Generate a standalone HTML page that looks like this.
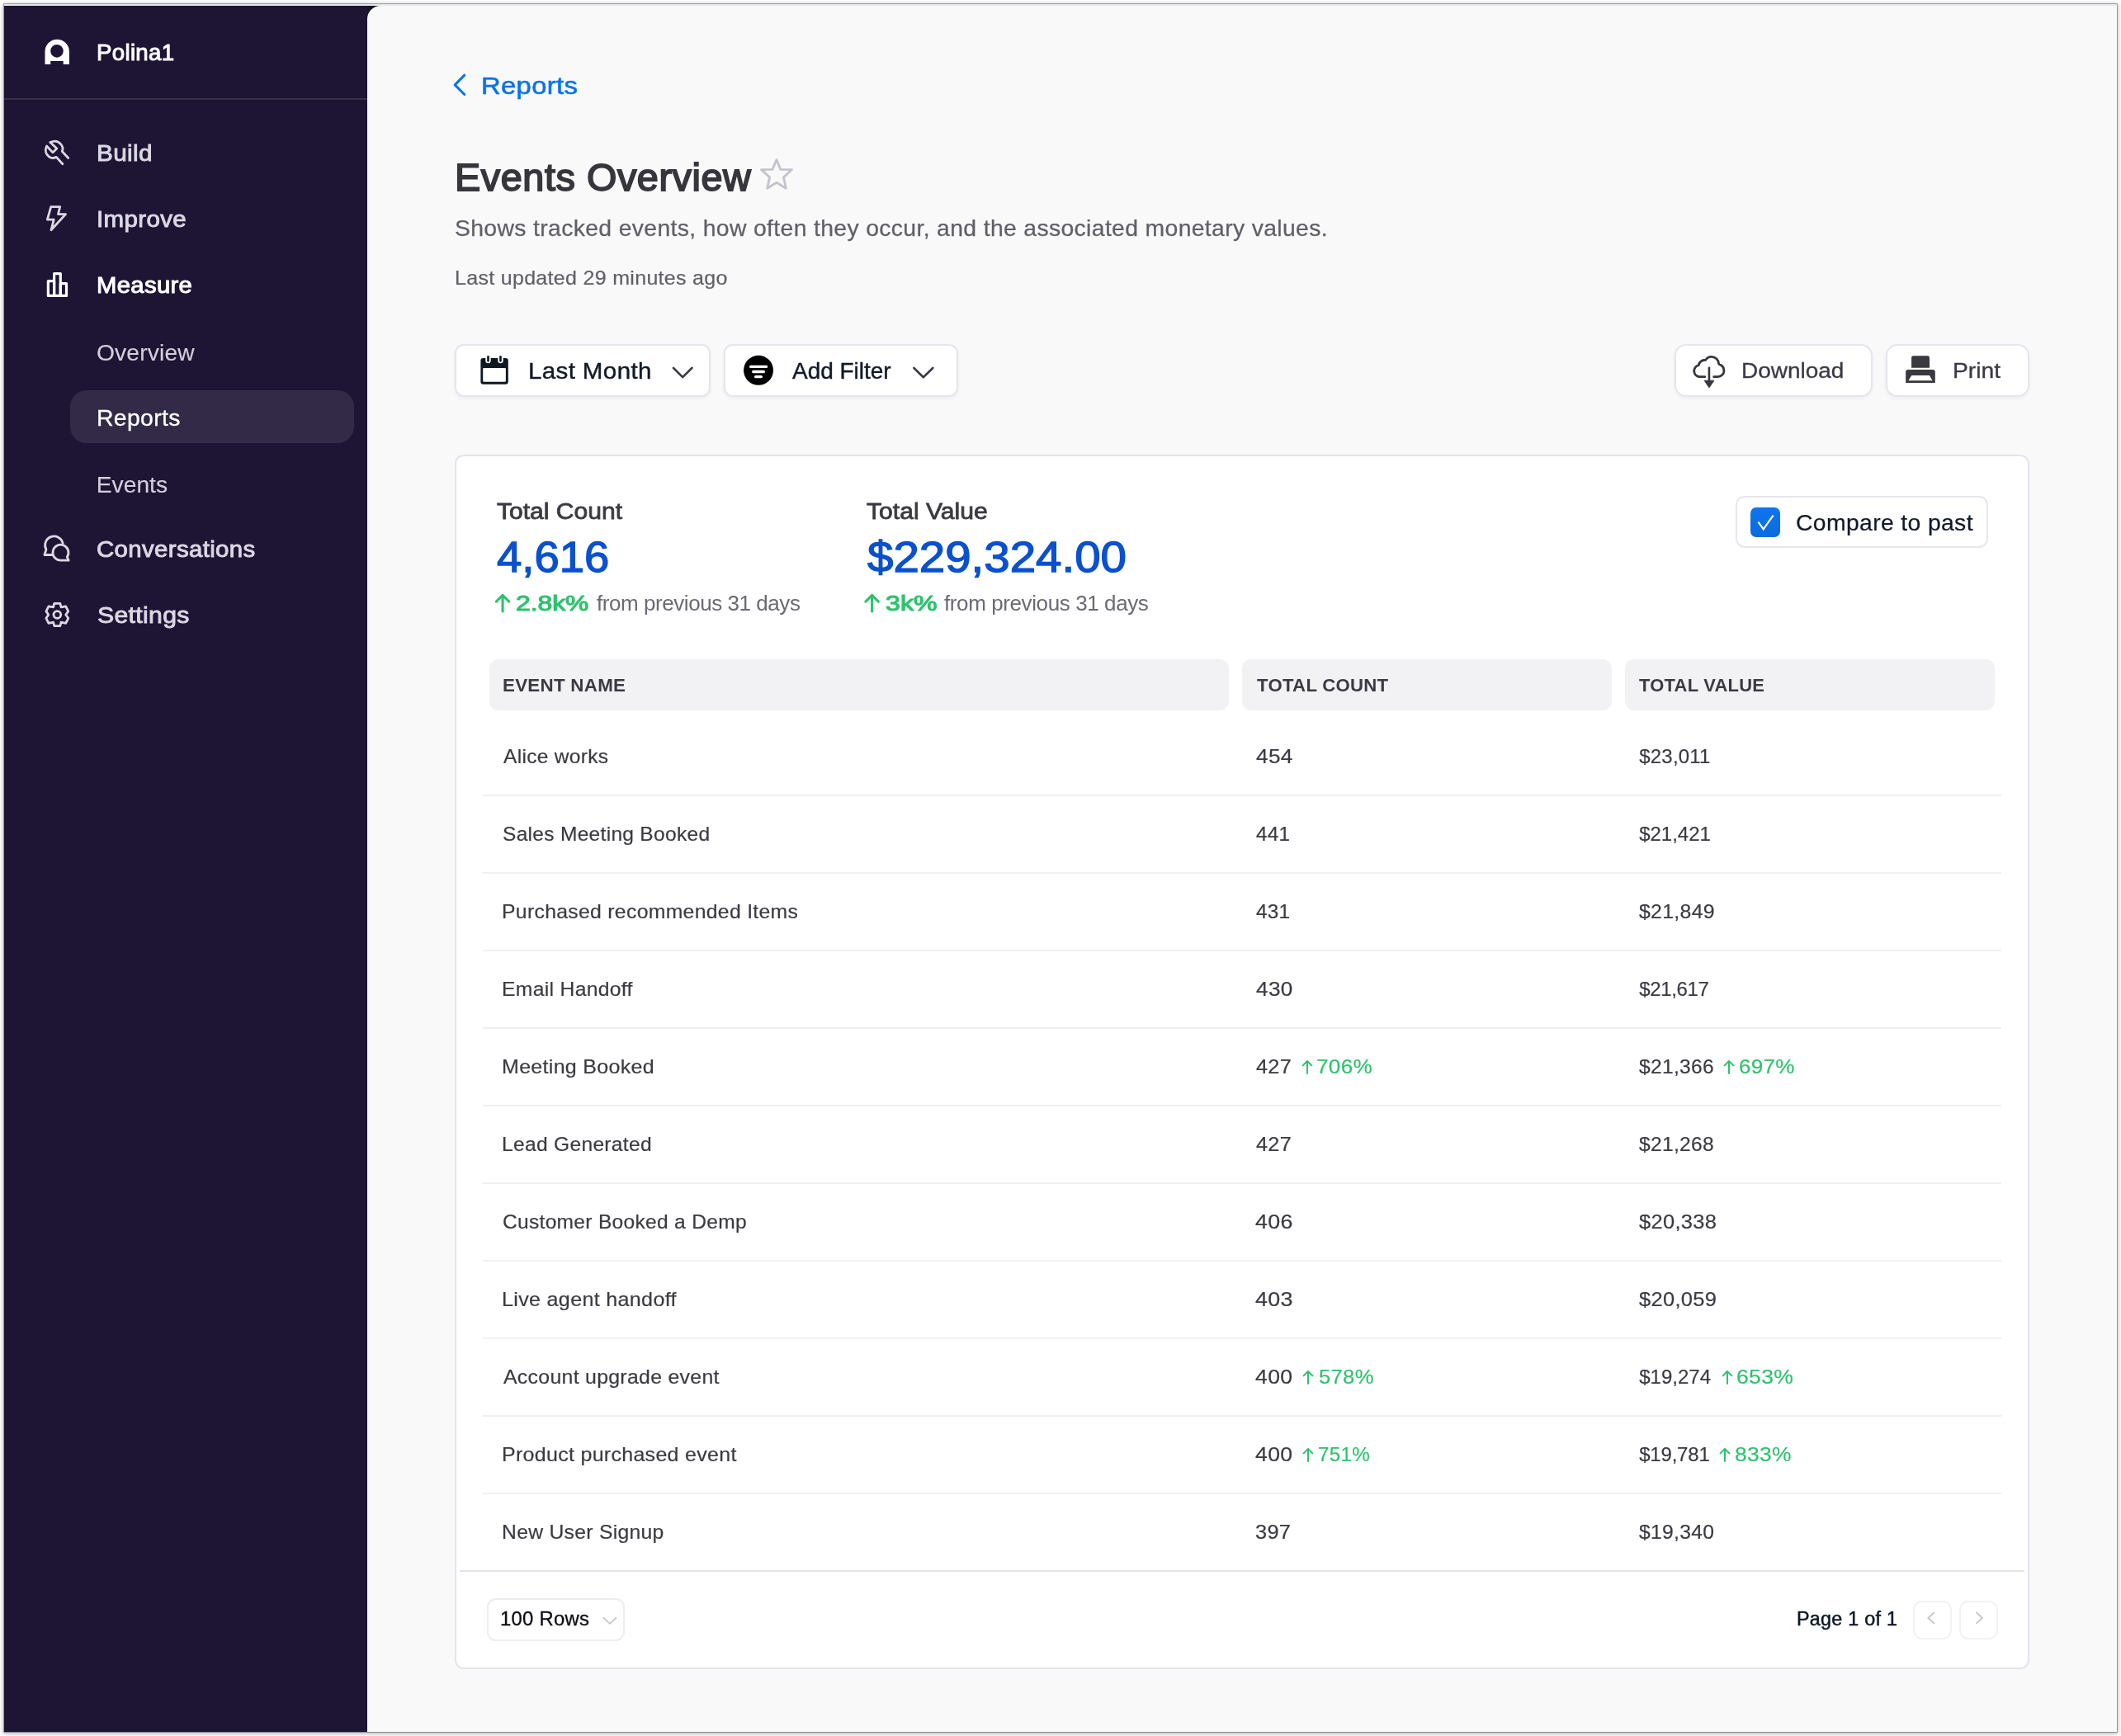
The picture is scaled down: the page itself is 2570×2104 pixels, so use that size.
<!DOCTYPE html>
<html lang="en">
<head>
<meta charset="utf-8">
<title>Events Overview</title>
<style>
html,body{margin:0;padding:0;}
body{width:2570px;height:2104px;background:#ffffff;position:relative;overflow:hidden;font-family:"Liberation Sans",sans-serif;}
.win{position:absolute;left:5px;top:5px;width:2560px;height:2094px;background:#1e1434;box-shadow:0 0 0 1px rgba(0,0,0,.28),0 1px 5px 1px rgba(0,0,0,.32);overflow:hidden;}
.abs,.t,.sep,.arr,.box,.ico{position:absolute;}
.t{line-height:1;white-space:nowrap;margin:0;}
.topstrip{left:5px;top:5px;width:2560px;height:2px;background:#e7e8ed;}
.sideline{left:5px;top:119px;width:440px;height:2px;background:#3a3148;}
.main{left:445px;top:7px;width:2120px;height:2092px;background:#f9f9fa;border-top-left-radius:16px;}
.pill{left:85px;top:473px;width:344px;height:64px;border-radius:20px;background:#322a46;}
.btn{background:#fff;border:2px solid #e5e5ec;border-radius:11px;box-sizing:border-box;box-shadow:0 2px 4px rgba(30,20,60,.05);}
.card{left:551px;top:551px;width:1908px;height:1472px;background:#fff;border:2px solid #e5e4ec;border-radius:11px;box-sizing:border-box;}
.th{top:799px;height:62px;background:#f2f2f5;border-radius:11px;}
.sep{left:585px;width:1840px;height:2px;background:#f0f0f3;}
.fsep{left:557px;top:1903px;width:1896px;height:2px;background:#e5e4ec;}
</style>
</head>
<body>
<div class="win abs"></div>
<div class="topstrip abs"></div>
<div class="abs" style="left:445px;top:7px;width:16px;height:16px;background:#101722"></div>
<div class="main abs"></div>
<div class="sideline abs"></div>
<div class="pill abs"></div>

<!-- toolbar buttons -->
<div class="btn abs" style="left:551px;top:417px;width:310px;height:64px"></div>
<div class="btn abs" style="left:877px;top:417px;width:284px;height:64px"></div>
<div class="btn abs" style="left:2029px;top:417px;width:240px;height:64px;border-radius:14px"></div>
<div class="btn abs" style="left:2285px;top:417px;width:174px;height:64px;border-radius:14px"></div>

<!-- card -->
<div class="card abs"></div>
<div class="th abs" style="left:593px;width:896px"></div>
<div class="th abs" style="left:1505px;width:448px"></div>
<div class="th abs" style="left:1969px;width:448px"></div>
<div class="btn abs" style="left:2103px;top:601px;width:306px;height:63px;box-shadow:none;border-color:#e6e6ee"></div>
<div class="abs" style="left:2121px;top:615px;width:36px;height:36px;border-radius:7px;background:linear-gradient(#0d76ee,#0a6bdf)"></div>
<div class="sep" style="top:963px"></div>
<div class="sep" style="top:1057px"></div>
<div class="sep" style="top:1151px"></div>
<div class="sep" style="top:1245px"></div>
<div class="sep" style="top:1339px"></div>
<div class="sep" style="top:1433px"></div>
<div class="sep" style="top:1527px"></div>
<div class="sep" style="top:1621px"></div>
<div class="sep" style="top:1715px"></div>
<div class="sep" style="top:1809px"></div>
<div class="fsep abs"></div>
<div class="btn abs" style="left:590px;top:1937px;width:167px;height:52px;box-shadow:none;border-color:#ededf2"></div>
<div class="btn abs" style="left:2317.5px;top:1939.5px;width:47px;height:47px;box-shadow:none;border-color:#f2f2f6;border-radius:11px"></div>
<div class="btn abs" style="left:2373.5px;top:1939.5px;width:47px;height:47px;box-shadow:none;border-color:#f2f2f6;border-radius:11px"></div>

<svg class="abs" style="left:0;top:0" width="2570" height="2104" viewBox="0 0 2570 2104" fill="none">
<!-- brand logo -->
<path fill="#ffffff" fill-rule="evenodd" d="M54.5 78V62.4a14.7 14.7 0 0 1 29.4 0V78H76.7V74H61.2V78Z M76.75 61.85a7.8 7.8 0 1 0-15.6 0a7.8 7.8 0 1 0 15.6 0Z"/>
<!-- sidebar icons -->
<g stroke="#dcd8e3" stroke-width="2.8" stroke-linecap="round" stroke-linejoin="round">
  <!-- build / wrench -->
  <path d="M60.97 172.58L68.83 180.04L63.99 184.88L56.53 177.02C54.3 181.8 55.3 186.9 59.35 189.92C62 192 65.6 191.9 68.23 190.32L75.89 198.79"/>
  <path d="M60.97 172.58C65.8 170.2 70.6 171.3 73.6 174.6C76 177.3 76.5 180.8 75.28 183.47L82.74 191.53"/>
  <!-- improve / bolt -->
  <path d="M61.77 250.56H72.66L70.44 259.64H79.52L61.98 278.79L65.2 266.09H57.34Z"/>
  <!-- conversations -->
  <path d="M64 672.5H53.9L55.96 666.1A10.9 10.9 0 1 1 76.1 658.3"/>
  <path d="M83.15 679.2H73.47A9.5 9.5 0 1 1 81.25 675.17Z"/>
  <!-- settings gear -->
  <path d="M65.81 731.37H72.86L74.07 735.81L79.72 734.8L82.74 740.85L79.72 745L82.74 749.31L79.72 755.36L74.07 754.15L72.86 758.59H65.81L64.6 754.15L58.95 755.36L55.93 749.31L58.75 745L55.93 740.85L58.95 734.8L64.6 735.81Z"/>
  <circle cx="69.35" cy="745" r="4.4"/>
</g>
<!-- measure / bars (active, white) -->
<g stroke="#ffffff" stroke-width="3.2" stroke-linejoin="round">
  <path d="M58.35 340.65H65.6V358.39H58.35Z"/>
  <path d="M65.6 331.57H73.27V358.39H65.6Z"/>
  <path d="M73.27 343.67H80.52V358.39H73.27Z"/>
</g>
<!-- back chevron -->
<path d="M562.77 91.17L551.17 102.91L562.77 114.51" stroke="#0b73ea" stroke-width="3" stroke-linecap="round" stroke-linejoin="round"/>
<!-- star -->
<path d="M940.93 193.58L945.83 205.46L959.41 205.65L949.42 214.89L952.43 228.28L940.93 221.31L929.61 228.28L932.63 214.89L922.44 205.65L936.02 205.46Z" stroke="#c4c3cd" stroke-width="2.8" stroke-linejoin="round"/>
<!-- calendar -->
<g>
  <rect x="582.4" y="434" width="33.4" height="31.8" rx="3.2" fill="#0f1720"/>
  <rect x="585.2" y="446.1" width="27.7" height="16.6" rx="1" fill="#ffffff"/>
  <path d="M588.3 433V437a3.2 3.2 0 0 0 6.4 0V433Z M603.27 433V437a3.2 3.2 0 0 0 6.4 0V433Z" fill="#ffffff"/>
  <rect x="590.2" y="431.06" width="2.6" height="7.6" rx="1.3" fill="#0f1720"/>
  <rect x="605.17" y="431.06" width="2.6" height="7.6" rx="1.3" fill="#0f1720"/>
</g>
<!-- dropdown chevrons -->
<g stroke="#3a3a44" stroke-width="2.6" stroke-linecap="round" stroke-linejoin="round">
  <path d="M816 446L827.2 457.2L838.4 446"/>
  <path d="M1107.4 446L1118.8 457.2L1130.3 446"/>
</g>
<!-- filter -->
<circle cx="919.03" cy="448.85" r="18" fill="#000000"/>
<g stroke="#ffffff" stroke-width="3.3" stroke-linecap="round">
  <path d="M909.6 444.45H928.5"/><path d="M912.7 450.5H925.4"/><path d="M915.6 456.55H922.4"/>
</g>
<!-- download cloud -->
<g stroke="#36363d" stroke-width="2.8" stroke-linecap="round" stroke-linejoin="round">
  <path d="M2065.75 456.64H2060.39A7.09 7.09 0 0 1 2058.32 442.64C2058.5 439.5 2062 436 2066.79 436.25C2068.5 433.7 2071 432.4 2073.5 432.4C2078.5 432.4 2082.4 436 2082.69 441.09C2086.5 442.5 2089 446 2088.91 449.73C2088.9 453.5 2085.5 456.64 2081.48 456.64H2076.64"/>
  <path d="M2070.94 445.75V461.48" stroke-width="2.6"/>
</g>
<path d="M2065.06 461.13H2076.99L2070.94 469.95Z" fill="#36363d" stroke="#36363d" stroke-width="0.8" stroke-linejoin="round"/>
<!-- printer -->
<path fill="#3a393f" d="M2316.09 445.75V433.4a2.2 2.2 0 0 1 2.2-2.2H2335.8a2.2 2.2 0 0 1 2.2 2.2V445.75Z"/>
<path fill="#3a393f" fill-rule="evenodd" d="M2309.17 463.9V450.8a2.8 2.8 0 0 1 2.8-2.8H2342a2.8 2.8 0 0 1 2.8 2.8V463.9Z M2316.26 454.91H2337.86L2341.49 461.13H2312.46Z"/>
<!-- checkbox check -->
<path d="M2130.45 632.58L2136.72 641.44L2148.6 624.59" stroke="#ffffff" stroke-width="2.1" stroke-linecap="butt" stroke-linejoin="miter"/>
<!-- stat arrows -->
<g stroke="#2fc26e" stroke-width="3.1" stroke-linecap="round" stroke-linejoin="round">
  <path d="M609.05 741V721.4M601.3 729.2L609.05 721.4L616.8 729.2"/>
  <path d="M1056.6 741V721.4M1048.85 729.2L1056.6 721.4L1064.35 729.2"/>
</g>
<!-- footer chevrons -->
<g stroke="#c4c3cc" stroke-width="1.7" stroke-linejoin="miter">
  <path d="M730.9 1960.4L738.9 1967.9L746.9 1960.4"/>
  <path d="M2343.9 1954L2336.3 1961L2343.9 1967.9"/>
  <path d="M2394.4 1954L2402 1961L2394.4 1967.9"/>
</g>
</svg>

<svg class="arr" style="left:1576.6px;top:1284.0px" width="14" height="18" viewBox="0 0 14 18"><path d="M7 17V2M1.6 7.4L7 2l5.4 5.4" fill="none" stroke="#2fc26e" stroke-width="2" stroke-linecap="round" stroke-linejoin="round"/></svg>
<svg class="arr" style="left:2088.1px;top:1284.0px" width="14" height="18" viewBox="0 0 14 18"><path d="M7 17V2M1.6 7.4L7 2l5.4 5.4" fill="none" stroke="#2fc26e" stroke-width="2" stroke-linecap="round" stroke-linejoin="round"/></svg>
<svg class="arr" style="left:1578.2px;top:1660.0px" width="14" height="18" viewBox="0 0 14 18"><path d="M7 17V2M1.6 7.4L7 2l5.4 5.4" fill="none" stroke="#2fc26e" stroke-width="2" stroke-linecap="round" stroke-linejoin="round"/></svg>
<svg class="arr" style="left:2085.8px;top:1660.0px" width="14" height="18" viewBox="0 0 14 18"><path d="M7 17V2M1.6 7.4L7 2l5.4 5.4" fill="none" stroke="#2fc26e" stroke-width="2" stroke-linecap="round" stroke-linejoin="round"/></svg>
<svg class="arr" style="left:1578.2px;top:1754.0px" width="14" height="18" viewBox="0 0 14 18"><path d="M7 17V2M1.6 7.4L7 2l5.4 5.4" fill="none" stroke="#2fc26e" stroke-width="2" stroke-linecap="round" stroke-linejoin="round"/></svg>
<svg class="arr" style="left:2082.5px;top:1754.0px" width="14" height="18" viewBox="0 0 14 18"><path d="M7 17V2M1.6 7.4L7 2l5.4 5.4" fill="none" stroke="#2fc26e" stroke-width="2" stroke-linecap="round" stroke-linejoin="round"/></svg>
<div class="abs" id="textlayer" style="left:0;top:0;width:2570px;height:2104px;will-change:transform">
<nav aria-label="Sidebar">
<div class="t " id="brand" style="left:116.74px;top:49.9px;font-size:27.6px;font-weight:400;color:#ffffff;letter-spacing:0.331px;transform:scaleX(1.0002);transform-origin:0 0;-webkit-text-stroke:1.0px #ffffff;">Polina1</div>
<div class="t " id="nav_build" style="left:116.86px;top:171.6px;font-size:27.6px;font-weight:400;color:#dcd8e3;letter-spacing:0.331px;transform:scaleX(1.0770);transform-origin:0 0;-webkit-text-stroke:0.9px #dcd8e3;">Build</div>
<div class="t " id="nav_improve" style="left:116.88px;top:251.6px;font-size:27.6px;font-weight:400;color:#dcd8e3;letter-spacing:0.331px;transform:scaleX(1.0694);transform-origin:0 0;-webkit-text-stroke:0.9px #dcd8e3;">Improve</div>
<div class="t " id="nav_measure" style="left:116.94px;top:331.6px;font-size:27.6px;font-weight:400;color:#ffffff;letter-spacing:0.331px;transform:scaleX(1.0598);transform-origin:0 0;-webkit-text-stroke:1.0px #ffffff;">Measure</div>
<div class="t " id="nav_overview" style="left:116.95px;top:412.7px;font-size:28.2px;font-weight:400;color:#d3cedb;letter-spacing:0.186px;-webkit-text-stroke:0.15px #d3cedb;">Overview</div>
<div class="t " id="nav_reports" style="left:116.64px;top:493.0px;font-size:28.0px;font-weight:400;color:#ffffff;letter-spacing:0.336px;transform:scaleX(1.0134);transform-origin:0 0;-webkit-text-stroke:0.3px #ffffff;">Reports</div>
<div class="t " id="nav_events" style="left:116.77px;top:572.9px;font-size:28.2px;font-weight:400;color:#d3cedb;letter-spacing:0.025px;-webkit-text-stroke:0.15px #d3cedb;">Events</div>
<div class="t " id="nav_conv" style="left:117.20px;top:651.6px;font-size:27.6px;font-weight:400;color:#dcd8e3;letter-spacing:0.331px;transform:scaleX(1.0656);transform-origin:0 0;-webkit-text-stroke:0.9px #dcd8e3;">Conversations</div>
<div class="t " id="nav_settings" style="left:117.65px;top:731.5px;font-size:27.6px;font-weight:400;color:#dcd8e3;letter-spacing:0.331px;transform:scaleX(1.0917);transform-origin:0 0;-webkit-text-stroke:0.9px #dcd8e3;">Settings</div>
</nav>
<header>
<div class="t " id="back" style="left:582.97px;top:89.0px;font-size:30.0px;font-weight:400;color:#0b73ea;letter-spacing:0.360px;transform:scaleX(1.0897);transform-origin:0 0;-webkit-text-stroke:0.6px #0b73ea;">Reports</div>
<div class="t " id="title" style="left:551.26px;top:191.8px;font-size:46px;font-weight:400;color:#36363c;letter-spacing:0.552px;transform:scaleX(1.0170);transform-origin:0 0;-webkit-text-stroke:1.8px #36363c;">Events Overview</div>
<div class="t " id="subtitle" style="left:551.44px;top:263.3px;font-size:27.8px;font-weight:400;color:#5f5f67;letter-spacing:0.334px;transform:scaleX(1.0203);transform-origin:0 0;-webkit-text-stroke:0.25px #5f5f67;">Shows tracked events, how often they occur, and the associated monetary values.</div>
<div class="t " id="updated" style="left:551.05px;top:324.6px;font-size:24px;font-weight:400;color:#5f5f67;letter-spacing:0.288px;transform:scaleX(1.0423);transform-origin:0 0;-webkit-text-stroke:0.2px #5f5f67;">Last updated 29 minutes ago</div>
<div class="t " id="b_month" style="left:640.20px;top:435.7px;font-size:28px;font-weight:400;color:#121826;letter-spacing:0.336px;transform:scaleX(1.0558);transform-origin:0 0;-webkit-text-stroke:0.4px #121826;">Last Month</div>
<div class="t " id="b_filter" style="left:960.00px;top:435.7px;font-size:28px;font-weight:400;color:#121826;letter-spacing:-0.032px;-webkit-text-stroke:0.4px #121826;">Add Filter</div>
<div class="t " id="b_download" style="left:2110.38px;top:437.2px;font-size:25.5px;font-weight:400;color:#3a3a44;transform:scaleX(1.0972);transform-origin:0 0;-webkit-text-stroke:0.3px #3a3a44;">Download</div>
<div class="t " id="b_print" style="left:2365.76px;top:437.2px;font-size:25.5px;font-weight:400;color:#3a3a44;transform:scaleX(1.1096);transform-origin:0 0;-webkit-text-stroke:0.3px #3a3a44;">Print</div>
</header>
<section aria-label="Totals">
<div class="t " id="s_count_l" style="left:602.36px;top:605.1px;font-size:28.2px;font-weight:400;color:#3a3a42;transform:scaleX(1.0663);transform-origin:0 0;-webkit-text-stroke:0.8px #3a3a42;">Total Count</div>
<div class="t " id="s_count_v" style="left:602.24px;top:650.0px;font-size:51px;font-weight:400;color:#0a50cf;transform:scaleX(1.0677);transform-origin:0 0;-webkit-text-stroke:1.3px #0a50cf;">4,616</div>
<div class="t " id="s_value_l" style="left:1049.96px;top:605.1px;font-size:28.2px;font-weight:400;color:#3a3a42;transform:scaleX(1.0684);transform-origin:0 0;-webkit-text-stroke:0.8px #3a3a42;">Total Value</div>
<div class="t " id="s_value_v" style="left:1050.72px;top:650.0px;font-size:51px;font-weight:400;color:#0a50cf;transform:scaleX(1.1070);transform-origin:0 0;-webkit-text-stroke:1.3px #0a50cf;">$229,324.00</div>
<div class="t " id="s_count_p" style="left:625.38px;top:718.0px;font-size:26px;font-weight:400;color:#2fc26e;transform:scaleX(1.2232);transform-origin:0 0;-webkit-text-stroke:1.1px #2fc26e;">2.8k%</div>
<div class="t " id="s_count_f" style="left:723.00px;top:718.0px;font-size:26px;font-weight:400;color:#6a6a74;letter-spacing:-0.444px;">from previous 31 days</div>
<div class="t " id="s_value_p" style="left:1073.18px;top:718.0px;font-size:26px;font-weight:400;color:#2fc26e;transform:scaleX(1.2377);transform-origin:0 0;-webkit-text-stroke:1.1px #2fc26e;">3k%</div>
<div class="t " id="s_value_f" style="left:1144.00px;top:718.0px;font-size:26px;font-weight:400;color:#6a6a74;letter-spacing:-0.399px;">from previous 31 days</div>
<div class="t " id="compare" style="left:2175.77px;top:619.7px;font-size:28px;font-weight:400;color:#121826;letter-spacing:0.336px;transform:scaleX(1.0134);transform-origin:0 0;-webkit-text-stroke:0.2px #121826;">Compare to past</div>
</section>
<section aria-label="Events table">
<div class="t " id="h_name" style="left:608.60px;top:820.8px;font-size:21.5px;font-weight:700;color:#3a3a42;letter-spacing:0.258px;transform:scaleX(1.0398);transform-origin:0 0;">EVENT NAME</div>
<div class="t " id="h_count" style="left:1522.50px;top:820.8px;font-size:21.5px;font-weight:700;color:#3a3a42;letter-spacing:0.258px;transform:scaleX(1.0315);transform-origin:0 0;">TOTAL COUNT</div>
<div class="t " id="h_value" style="left:1986.20px;top:820.8px;font-size:21.5px;font-weight:700;color:#3a3a42;letter-spacing:0.258px;transform:scaleX(1.0193);transform-origin:0 0;">TOTAL VALUE</div>
<div class="t " id="r0n" style="left:610.00px;top:905.2px;font-size:24.0px;font-weight:400;color:#3a3a41;letter-spacing:0.288px;transform:scaleX(1.0219);transform-origin:0 0;-webkit-text-stroke:0.2px #3a3a41;">Alice works</div>
<div class="t " id="r0c" style="left:1521.50px;top:905.2px;font-size:24.0px;font-weight:400;color:#3a3a41;letter-spacing:0.288px;transform:scaleX(1.0917);transform-origin:0 0;-webkit-text-stroke:0.2px #3a3a41;">454</div>
<div class="t " id="r0v" style="left:1986.20px;top:905.2px;font-size:24.0px;font-weight:400;color:#3a3a41;letter-spacing:0.217px;-webkit-text-stroke:0.2px #3a3a41;">$23,011</div>
<div class="t " id="r1n" style="left:609.24px;top:999.2px;font-size:24.0px;font-weight:400;color:#3a3a41;letter-spacing:0.288px;transform:scaleX(1.0220);transform-origin:0 0;-webkit-text-stroke:0.2px #3a3a41;">Sales Meeting Booked</div>
<div class="t " id="r1c" style="left:1521.52px;top:999.2px;font-size:24.0px;font-weight:400;color:#3a3a41;letter-spacing:0.288px;transform:scaleX(1.0109);transform-origin:0 0;-webkit-text-stroke:0.2px #3a3a41;">441</div>
<div class="t " id="r1v" style="left:1986.20px;top:999.2px;font-size:24.0px;font-weight:400;color:#3a3a41;letter-spacing:-0.014px;-webkit-text-stroke:0.2px #3a3a41;">$21,421</div>
<div class="t " id="r2n" style="left:608.07px;top:1093.2px;font-size:24.0px;font-weight:400;color:#3a3a41;letter-spacing:0.288px;transform:scaleX(1.0324);transform-origin:0 0;-webkit-text-stroke:0.2px #3a3a41;">Purchased recommended Items</div>
<div class="t " id="r2c" style="left:1521.52px;top:1093.2px;font-size:24.0px;font-weight:400;color:#3a3a41;letter-spacing:0.288px;transform:scaleX(1.0109);transform-origin:0 0;-webkit-text-stroke:0.2px #3a3a41;">431</div>
<div class="t " id="r2v" style="left:1986.20px;top:1093.2px;font-size:24.0px;font-weight:400;color:#3a3a41;letter-spacing:0.288px;transform:scaleX(1.0352);transform-origin:0 0;-webkit-text-stroke:0.2px #3a3a41;">$21,849</div>
<div class="t " id="r3n" style="left:608.07px;top:1187.2px;font-size:24.0px;font-weight:400;color:#3a3a41;letter-spacing:0.288px;transform:scaleX(1.0304);transform-origin:0 0;-webkit-text-stroke:0.2px #3a3a41;">Email Handoff</div>
<div class="t " id="r3c" style="left:1521.50px;top:1187.2px;font-size:24.0px;font-weight:400;color:#3a3a41;letter-spacing:0.288px;transform:scaleX(1.0917);transform-origin:0 0;-webkit-text-stroke:0.2px #3a3a41;">430</div>
<div class="t " id="r3v" style="left:1986.20px;top:1187.2px;font-size:24.0px;font-weight:400;color:#3a3a41;letter-spacing:-0.347px;-webkit-text-stroke:0.2px #3a3a41;">$21,617</div>
<div class="t " id="r4n" style="left:608.05px;top:1281.2px;font-size:24.0px;font-weight:400;color:#3a3a41;letter-spacing:0.288px;transform:scaleX(1.0421);transform-origin:0 0;-webkit-text-stroke:0.2px #3a3a41;">Meeting Booked</div>
<div class="t " id="r4c" style="left:1521.51px;top:1281.2px;font-size:24.0px;font-weight:400;color:#3a3a41;letter-spacing:0.288px;transform:scaleX(1.0539);transform-origin:0 0;-webkit-text-stroke:0.2px #3a3a41;">427</div>
<div class="t " id="r4cp" style="left:1594.58px;top:1281.2px;font-size:24.0px;font-weight:400;color:#2fc26e;letter-spacing:0.288px;transform:scaleX(1.0890);transform-origin:0 0;-webkit-text-stroke:0.2px #2fc26e;">706%</div>
<div class="t " id="r4v" style="left:1986.20px;top:1281.2px;font-size:24.0px;font-weight:400;color:#3a3a41;letter-spacing:0.288px;transform:scaleX(1.0238);transform-origin:0 0;-webkit-text-stroke:0.2px #3a3a41;">$21,366</div>
<div class="t " id="r4vp" style="left:2107.19px;top:1281.2px;font-size:24.0px;font-weight:400;color:#2fc26e;letter-spacing:0.288px;transform:scaleX(1.0824);transform-origin:0 0;-webkit-text-stroke:0.2px #2fc26e;">697%</div>
<div class="t " id="r5n" style="left:608.08px;top:1375.2px;font-size:24.0px;font-weight:400;color:#3a3a41;letter-spacing:0.288px;transform:scaleX(1.0247);transform-origin:0 0;-webkit-text-stroke:0.2px #3a3a41;">Lead Generated</div>
<div class="t " id="r5c" style="left:1521.51px;top:1375.2px;font-size:24.0px;font-weight:400;color:#3a3a41;letter-spacing:0.288px;transform:scaleX(1.0539);transform-origin:0 0;-webkit-text-stroke:0.2px #3a3a41;">427</div>
<div class="t " id="r5v" style="left:1986.20px;top:1375.2px;font-size:24.0px;font-weight:400;color:#3a3a41;letter-spacing:0.288px;transform:scaleX(1.0238);transform-origin:0 0;-webkit-text-stroke:0.2px #3a3a41;">$21,268</div>
<div class="t " id="r6n" style="left:608.85px;top:1469.2px;font-size:24.0px;font-weight:400;color:#3a3a41;letter-spacing:0.288px;transform:scaleX(1.0232);transform-origin:0 0;-webkit-text-stroke:0.2px #3a3a41;">Customer Booked a Demp</div>
<div class="t " id="r6c" style="left:1521.49px;top:1469.2px;font-size:24.0px;font-weight:400;color:#3a3a41;letter-spacing:0.288px;transform:scaleX(1.1198);transform-origin:0 0;-webkit-text-stroke:0.2px #3a3a41;">406</div>
<div class="t " id="r6v" style="left:1986.21px;top:1469.2px;font-size:24.0px;font-weight:400;color:#3a3a41;letter-spacing:0.288px;transform:scaleX(1.0615);transform-origin:0 0;-webkit-text-stroke:0.2px #3a3a41;">$20,338</div>
<div class="t " id="r7n" style="left:608.04px;top:1563.2px;font-size:24.0px;font-weight:400;color:#3a3a41;letter-spacing:0.288px;transform:scaleX(1.0471);transform-origin:0 0;-webkit-text-stroke:0.2px #3a3a41;">Live agent handoff</div>
<div class="t " id="r7c" style="left:1521.49px;top:1563.2px;font-size:24.0px;font-weight:400;color:#3a3a41;letter-spacing:0.288px;transform:scaleX(1.1198);transform-origin:0 0;-webkit-text-stroke:0.2px #3a3a41;">403</div>
<div class="t " id="r7v" style="left:1986.21px;top:1563.2px;font-size:24.0px;font-weight:400;color:#3a3a41;letter-spacing:0.288px;transform:scaleX(1.0615);transform-origin:0 0;-webkit-text-stroke:0.2px #3a3a41;">$20,059</div>
<div class="t " id="r8n" style="left:610.00px;top:1657.2px;font-size:24.0px;font-weight:400;color:#3a3a41;letter-spacing:0.288px;transform:scaleX(1.0349);transform-origin:0 0;-webkit-text-stroke:0.2px #3a3a41;">Account upgrade event</div>
<div class="t " id="r8c" style="left:1521.49px;top:1657.2px;font-size:24.0px;font-weight:400;color:#3a3a41;letter-spacing:0.288px;transform:scaleX(1.1093);transform-origin:0 0;-webkit-text-stroke:0.2px #3a3a41;">400</div>
<div class="t " id="r8cp" style="left:1597.61px;top:1657.2px;font-size:24.0px;font-weight:400;color:#2fc26e;letter-spacing:0.288px;transform:scaleX(1.0675);transform-origin:0 0;-webkit-text-stroke:0.2px #2fc26e;">578%</div>
<div class="t " id="r8v" style="left:1986.20px;top:1657.2px;font-size:24.0px;font-weight:400;color:#3a3a41;letter-spacing:0.024px;-webkit-text-stroke:0.2px #3a3a41;">$19,274</div>
<div class="t " id="r8vp" style="left:2104.47px;top:1657.2px;font-size:24.0px;font-weight:400;color:#2fc26e;letter-spacing:0.288px;transform:scaleX(1.1055);transform-origin:0 0;-webkit-text-stroke:0.2px #2fc26e;">653%</div>
<div class="t " id="r9n" style="left:608.05px;top:1751.2px;font-size:24.0px;font-weight:400;color:#3a3a41;letter-spacing:0.288px;transform:scaleX(1.0409);transform-origin:0 0;-webkit-text-stroke:0.2px #3a3a41;">Product purchased event</div>
<div class="t " id="r9c" style="left:1521.49px;top:1751.2px;font-size:24.0px;font-weight:400;color:#3a3a41;letter-spacing:0.288px;transform:scaleX(1.1093);transform-origin:0 0;-webkit-text-stroke:0.2px #3a3a41;">400</div>
<div class="t " id="r9cp" style="left:1597.27px;top:1751.2px;font-size:24.0px;font-weight:400;color:#2fc26e;letter-spacing:0.288px;transform:scaleX(1.0081);transform-origin:0 0;-webkit-text-stroke:0.2px #2fc26e;">751%</div>
<div class="t " id="r9v" style="left:1986.20px;top:1751.2px;font-size:24.0px;font-weight:400;color:#3a3a41;letter-spacing:-0.197px;-webkit-text-stroke:0.2px #3a3a41;">$19,781</div>
<div class="t " id="r9vp" style="left:2102.29px;top:1751.2px;font-size:24.0px;font-weight:400;color:#2fc26e;letter-spacing:0.288px;transform:scaleX(1.0987);transform-origin:0 0;-webkit-text-stroke:0.2px #2fc26e;">833%</div>
<div class="t " id="r10n" style="left:608.07px;top:1845.2px;font-size:24.0px;font-weight:400;color:#3a3a41;letter-spacing:0.288px;transform:scaleX(1.0291);transform-origin:0 0;-webkit-text-stroke:0.2px #3a3a41;">New User Signup</div>
<div class="t " id="r10c" style="left:1521.11px;top:1845.2px;font-size:24.0px;font-weight:400;color:#3a3a41;letter-spacing:0.288px;transform:scaleX(1.0564);transform-origin:0 0;-webkit-text-stroke:0.2px #3a3a41;">397</div>
<div class="t " id="r10v" style="left:1986.20px;top:1845.2px;font-size:24.0px;font-weight:400;color:#3a3a41;letter-spacing:0.288px;transform:scaleX(1.0274);transform-origin:0 0;-webkit-text-stroke:0.2px #3a3a41;">$19,340</div>
</section>
<footer>
<div class="t " id="f_rows" style="left:606.46px;top:1951.1px;font-size:23.5px;font-weight:400;color:#0c0c14;letter-spacing:0.282px;transform:scaleX(1.0146);transform-origin:0 0;-webkit-text-stroke:0.3px #0c0c14;">100 Rows</div>
<div class="t " id="f_page" style="left:2177.33px;top:1951.0px;font-size:23.3px;font-weight:400;color:#101826;letter-spacing:0.280px;transform:scaleX(1.0007);transform-origin:0 0;-webkit-text-stroke:0.5px #101826;">Page 1 of 1</div>
</footer>
</div>
</body>
</html>
